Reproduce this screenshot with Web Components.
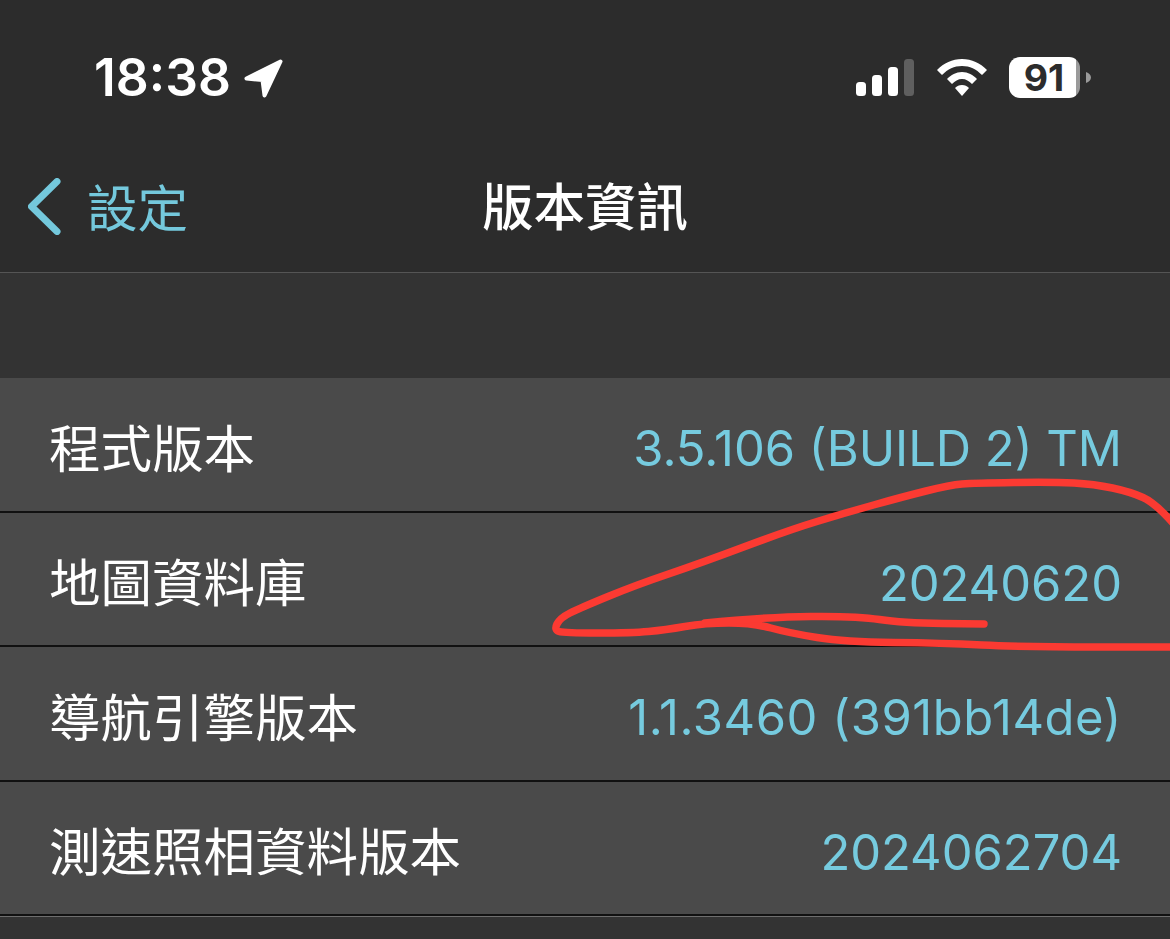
<!DOCTYPE html>
<html lang="zh-Hant">
<head>
<meta charset="utf-8">
<title>版本資訊</title>
<style>
    html, body { margin: 0; height: 939px; overflow: hidden; background: #333333; }
    body { font-family: Inter, "Noto Sans CJK TC", sans-serif; position: relative; }
</style>
</head>
<body>
<status-bar time="18:38" battery="91"></status-bar>
<nav-bar back="設定">版本資訊</nav-bar>
<info-list>
    <info-row value="3.5.106 (BUILD 2) TM">程式版本</info-row>
    <info-row value="20240620">地圖資料庫</info-row>
    <info-row value="1.1.3460 (391bb14de)" style="--value-tracking: .55px">導航引擎版本</info-row>
    <info-row value="2024062704">測速照相資料版本</info-row>
</info-list>
<red-scribble></red-scribble>

<script>
    class StatusBar extends HTMLElement {
        constructor() {
            super();
            this.attachShadow({mode: 'open'});
            this.shadowRoot.innerHTML = `
            <style>
                :host { display: flex; height: 140px; box-sizing: border-box; padding: 57px 79px 0 94px;
                    justify-content: space-between; align-items: flex-start; background: #2c2c2c; color: #fff; }
                .left { display: flex; gap: 13px; align-items: flex-start; }
                .time { font: 600 51.500px/41px Inter, sans-serif; letter-spacing: 0; }
                .right { display: flex; align-items: flex-start; }
                svg { display: block; }
                .signal { margin: 2px 23px 0 0; }
                .wifi { margin: 2px 22px 0 0; }
                .battery { width: 71px; height: 41px; border-radius: 11px; box-sizing: border-box;
                    background: linear-gradient(to right, #fff 67px, #9a9a9a 67px);
                    color: #2c2c2c; font: 700 37.500px/41px Inter, sans-serif; text-align: center; padding-right: 1px; }
                .nub { margin: 15px 0 0 6px; }
            </style>
            <div class="left">
                <span class="time">${this.getAttribute('time')}</span>
                <svg width="39" height="39" viewBox="0 0 39 39" style="margin-top:2px">
                    <path d="M36.500 2.500 L2.500 19.500 L18.500 21 L20.500 36.500 Z" fill="#fff" stroke="#fff" stroke-width="4" stroke-linejoin="round"/>
                </svg>
            </div>
            <div class="right">
                <svg class="signal" width="58" height="37" viewBox="0 0 58 37">
                    <rect x="0" y="23" width="10" height="14" rx="3.500" fill="#fff"/>
                    <rect x="16" y="16" width="10" height="21" rx="3.500" fill="#fff"/>
                    <rect x="32" y="8" width="10" height="29" rx="3.500" fill="#fff"/>
                    <rect x="48" y="0" width="10" height="37" rx="3.500" fill="#5f5f5f"/>
                </svg>
                <svg class="wifi" width="50" height="37" viewBox="0 0 50 37" fill="#fff">
                    <path d="M25 0C15 0 7 4 0 11L5 16C11 10 17 7 25 7C33 7 39 10 45 16L50 11C43 4 35 0 25 0Z"/>
                    <path d="M25 13C19 13 14 16 10 20L15 25C18 22 21 20 25 20C29 20 32 22 35 25L40 20C36 16 31 13 25 13Z"/>
                    <path d="M25 26C22 26 20 27 18 29L25 37L32 29C30 27 28 26 25 26Z"/>
                </svg>
                <div class="battery">${this.getAttribute('battery')}</div>
                <svg class="nub" width="5" height="11" viewBox="0 0 5 11"><path d="M0 0C3 1 5 3 5 5.500C5 8 3 10 0 11Z" fill="#9a9a9a"/></svg>
            </div>`;
        }
    }
    customElements.define('status-bar', StatusBar);

    class NavBar extends HTMLElement {
        constructor() {
            super();
            this.attachShadow({mode: 'open'});
            this.shadowRoot.innerHTML = `
            <style>
                :host { display: grid; grid-template-columns: minmax(0, 1fr) auto minmax(0, 1fr); align-items: center; height: 133px;
                    box-sizing: border-box; padding: 0; background: #2c2c2c; border-bottom: 1px solid #555; }
                .back { display: flex; align-items: center; gap: 26px; padding-left: 28px; color: #74c8dc;
                    font: 400 50.500px/60px "Noto Sans CJK TC", sans-serif; }
                .back span { margin-bottom: 3px; }
                svg { display: block; }
                .title { color: #fff; font: 500 51.500px/60px "Noto Sans CJK TC", sans-serif; margin-bottom: 4px; }
            </style>
            <div class="back">
                <svg width="33" height="57" viewBox="0 0 33 57">
                    <path d="M29 3.500 L3.500 28.500 L29 53.500" fill="none" stroke="#74c8dc" stroke-width="7" stroke-linecap="round" stroke-linejoin="round"/>
                </svg>
                <span>${this.getAttribute('back')}</span>
            </div>
            <div class="title"><slot></slot></div>
            <div></div>`;
        }
    }
    customElements.define('nav-bar', NavBar);

    class InfoList extends HTMLElement {
        constructor() {
            super();
            this.attachShadow({mode: 'open'});
            this.shadowRoot.innerHTML = `
            <style>
                :host { display: block; margin-top: 105px; }
            </style>
            <slot></slot>`;
        }
    }
    customElements.define('info-list', InfoList);

    class InfoRow extends HTMLElement {
        constructor() {
            super();
            this.attachShadow({mode: 'open'});
            this.shadowRoot.innerHTML = `
            <style>
                :host { display: flex; justify-content: space-between; align-items: center; height: 134.500px;
                    box-sizing: border-box; padding: 6px 48px 0 49px; background: #4a4a4a;
                    border-bottom: 2px solid #111; box-shadow: 0 1px 0 #6e6e6e; position: relative; }
                .label { color: #fff; font: 400 51.500px/60px "Noto Sans CJK TC", sans-serif; margin-bottom: 3px; }
                .value { color: #76cbdf; font: 400 48.900px/60px Inter, sans-serif; margin-top: 4px;
                    letter-spacing: var(--value-tracking, 0); }
            </style>
            <span class="label"><slot></slot></span>
            <span class="value">${this.getAttribute('value')}</span>`;
        }
    }
    customElements.define('info-row', InfoRow);

    // hand drawn mark on top of the screenshot, points are midpoint smoothed
    class RedScribble extends HTMLElement {
        constructor() {
            super();
            this.attachShadow({mode: 'open'});
            let outer = [[1172,522],[1155,503],[1131,492],[1094,484],[1054,482],[974,483],[950,485],[902,497],[845,513],[789,530],[701,563],[636,585],[580,608],[560,618],[554,630],[564,633],[632,633],[665,630],[705,623],[753,623],[789,633],[845,642],[942,643],[1022,647],[1172,647]];
            let inner = [[705,623],[765,617],[857,616],[902,623],[984,624]];
            this.shadowRoot.innerHTML = `
            <style>
                :host { position: absolute; left: 0; top: 0; width: 1170px; height: 939px; pointer-events: none; }
                svg { display: block; }
                path { fill: none; stroke: #fb3a32; stroke-width: 7.500; stroke-linecap: round; stroke-linejoin: round; }
            </style>
            <svg width="1170" height="939" viewBox="0 0 1170 939">
                <path d="${this._smooth(outer)}"/>
                <path d="${this._smooth(inner)}"/>
            </svg>`;
        }

        _smooth(pts) {
            let d = 'M' + pts[0].join(' ');
            for (let i = 1; i < pts.length - 1; i++) {
                let mx = (pts[i][0] + pts[i + 1][0]) / 2;
                let my = (pts[i][1] + pts[i + 1][1]) / 2;
                d += ' Q' + pts[i].join(' ') + ' ' + mx + ' ' + my;
            }
            return d + ' L' + pts[pts.length - 1].join(' ');
        }
    }
    customElements.define('red-scribble', RedScribble);
</script>
</body>
</html>
